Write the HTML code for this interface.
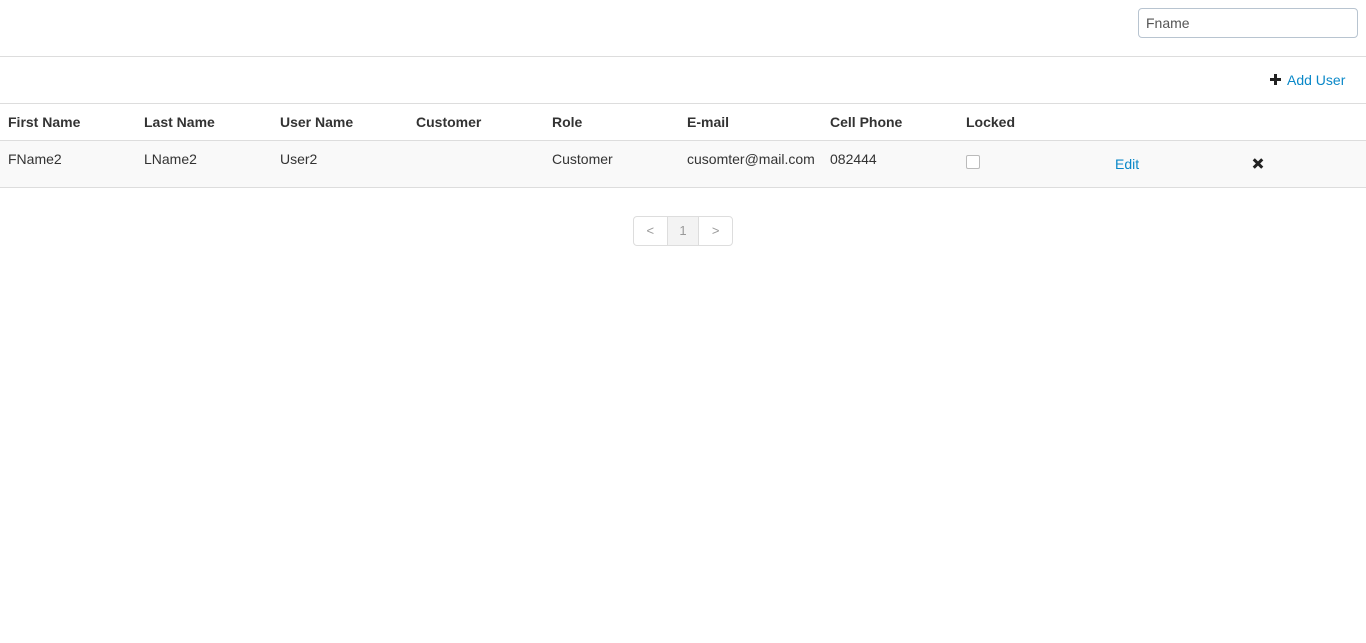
<!DOCTYPE html>
<html><head><meta charset="utf-8"><style>
*{box-sizing:border-box;margin:0;padding:0}
body{width:1366px;height:643px;background:#fff;font-family:"Liberation Sans",sans-serif;font-size:14px;color:#333;position:relative;overflow:hidden}
.abs{position:absolute}
.line{position:absolute;left:0;width:1366px;height:1px;background:#ddd}
.search{left:1138px;top:8px;width:220px;height:30px;border:1px solid #b8c4d0;border-radius:4px;padding:0 7px;line-height:28px;color:#555}
.th{font-weight:bold;top:114px}
.td{top:151px}
.row{position:absolute;left:0;top:141px;width:1366px;height:46px;background:#f9f9f9}
.blue{color:#0a88c8}
.pag{left:633px;top:216px;width:100px;height:30px;border:1px solid #ddd;border-radius:4px;display:flex;overflow:hidden}
.pag div{width:33px;text-align:center;line-height:28px;color:#999;font-size:13px}
</style></head><body>
<div class="abs search">Fname</div>
<div class="line" style="top:56px"></div>
<div class="abs" style="left:1270px;top:74px;width:11px;height:11px">
 <div class="abs" style="left:0;top:4px;width:11px;height:3px;background:#222"></div>
 <div class="abs" style="left:4px;top:0;width:3px;height:11px;background:#222"></div>
</div>
<div class="abs blue" style="left:1287px;top:72px">Add User</div>
<div class="line" style="top:103px"></div>
<div class="row"></div>
<div class="line" style="top:140px"></div>
<div class="line" style="top:187px"></div>
<div class="abs th" style="left:8px">First Name</div>
<div class="abs th" style="left:144px">Last Name</div>
<div class="abs th" style="left:280px">User Name</div>
<div class="abs th" style="left:416px">Customer</div>
<div class="abs th" style="left:552px">Role</div>
<div class="abs th" style="left:687px">E-mail</div>
<div class="abs th" style="left:830px">Cell Phone</div>
<div class="abs th" style="left:966px">Locked</div>
<div class="abs td" style="left:8px">FName2</div>
<div class="abs td" style="left:144px">LName2</div>
<div class="abs td" style="left:280px">User2</div>
<div class="abs td" style="left:552px">Customer</div>
<div class="abs td" style="left:687px">cusomter@mail.com</div>
<div class="abs td" style="left:830px">082444</div>
<div class="abs" style="left:966px;top:155px;width:14px;height:14px;border:1px solid #bbb;border-radius:2px;background:#fff"></div>
<div class="abs blue" style="left:1115px;top:156px">Edit</div>
<div class="abs" style="left:1253px;top:158px;width:10px;height:10px">
 <div class="abs" style="left:-1px;top:3.5px;width:12px;height:3px;background:#222;transform:rotate(45deg)"></div>
 <div class="abs" style="left:-1px;top:3.5px;width:12px;height:3px;background:#222;transform:rotate(-45deg)"></div>
</div>
<div class="abs pag"><div>&lt;</div><div style="background:#f3f3f3;border-left:1px solid #ddd;border-right:1px solid #ddd">1</div><div>&gt;</div></div>
</body></html>
